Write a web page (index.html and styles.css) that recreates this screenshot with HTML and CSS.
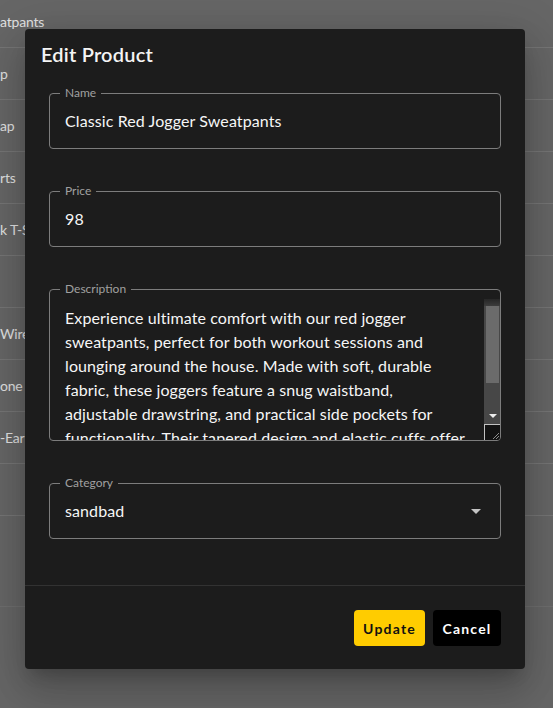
FILE: index.html
```html
<!DOCTYPE html>
<html lang="en">
<head>
<meta charset="utf-8">
<title>Edit Product</title>
<link rel="stylesheet" href="styles.css">
</head>
<body>
<div class="page">
  <div class="table">
    <div class="row">atpants</div>
    <div class="row">p</div>
    <div class="row">ap</div>
    <div class="row">rts</div>
    <div class="row">k T-Shirt</div>
    <div class="row"></div>
    <div class="row">Wireless Earbuds</div>
    <div class="row">one &amp; Charger</div>
    <div class="row">-Ear Headphones</div>
    <div class="row"></div>
    <div class="table-foot"></div>
  </div>
</div>

<div class="dialog" role="dialog" aria-labelledby="dlg-title">
  <h2 class="dialog-title" id="dlg-title">Edit Product</h2>
  <div class="dialog-content">
    <div class="field">
      <span class="field-label">Name</span>
      <div class="field-value">Classic Red Jogger Sweatpants</div>
    </div>
    <div class="field">
      <span class="field-label">Price</span>
      <div class="field-value">98</div>
    </div>
    <div class="field field-multi">
      <span class="field-label">Description</span>
      <textarea class="field-textarea">Experience ultimate comfort with our red jogger
sweatpants, perfect for both workout sessions and
lounging around the house. Made with soft, durable
fabric, these joggers feature a snug waistband,
adjustable drawstring, and practical side pockets for
functionality. Their tapered design and elastic cuffs offer
a modern fit that keeps you looking stylish.</textarea>
      <div class="scrollbar" aria-hidden="true">
        <div class="sb-top"></div>
        <div class="sb-track"><div class="sb-thumb"></div></div>
        <div class="sb-down"><svg viewBox="0 0 8 4" width="8" height="4"><path d="M0 0h8L4 4z" fill="#ececec"/></svg></div>
        <div class="sb-corner"><svg viewBox="0 0 15 15" width="15" height="15"><path d="M14 8L8 14M14 11L11 14" stroke="#8c8c8c" stroke-width="1"/></svg></div>
      </div>
    </div>
    <div class="field field-select">
      <span class="field-label">Category</span>
      <div class="field-value">sandbad</div>
      <svg class="select-arrow" viewBox="0 0 24 24" width="24" height="24" aria-hidden="true"><path d="M7 10l5 5 5-5z" fill="#c4c4c4"/></svg>
    </div>
  </div>
  <div class="dialog-actions">
    <button class="btn btn-update">Update</button>
    <button class="btn btn-cancel">Cancel</button>
  </div>
</div>
</body>
</html>
```

FILE: styles.css
```css
* { box-sizing: border-box; }

html, body {
  margin: 0;
  padding: 0;
  height: 100%;
}

body {
  background: #666666;
  font-family: Lato, "Noto Sans", sans-serif;
  overflow: hidden;
}

.page {
  height: 100%;
}

.table {
  margin-top: -4px;
}

.row {
  height: 52px;
  border-bottom: 1px solid #767676;
  display: flex;
  align-items: center;
  font-size: 14px;
  letter-spacing: -0.2px;
  color: #e2e2e2;
  white-space: nowrap;
  overflow: hidden;
}

.table-foot {
  height: 91px;
  border-bottom: 1px solid #6f6f6f;
}

.dialog {
  position: absolute;
  left: 25px;
  top: 29px;
  width: 500px;
  background: #1c1c1c;
  border-radius: 4px;
  box-shadow: 0 11px 15px -7px rgba(0,0,0,0.2),
              0 24px 38px 3px rgba(0,0,0,0.14),
              0 9px 46px 8px rgba(0,0,0,0.12);
  color: #ffffff;
}

.dialog-title {
  margin: 0;
  height: 64px;
  padding: 9px 16px 0;
  font-size: 20px;
  line-height: 32px;
  font-weight: 600;
  letter-spacing: 0.2px;
  color: #f4f4f4;
}

.dialog-content {
  padding: 0 24px 46px;
  display: flex;
  flex-direction: column;
  gap: 42px;
  border-bottom: 1px solid #323232;
}

.field {
  position: relative;
  border: 1px solid #7c7c7c;
  border-radius: 4px;
}

.field-label {
  position: absolute;
  top: -9px;
  left: 10px;
  padding: 0 5px;
  background: #1c1c1c;
  font-size: 12px;
  line-height: 16px;
  color: #a0a0a0;
}

.field-value {
  padding: 15px 15px;
  font-size: 16px;
  line-height: 24px;
  letter-spacing: 0.1px;
  color: #f6f6f6;
}

.field-multi {
  height: 152px;
  padding-top: 9px;
  display: flex;
}

.field-textarea {
  display: block;
  flex: 1;
  min-width: 0;
  height: 141px;
  margin: 0;
  border: 0;
  outline: none;
  background: transparent;
  color: #f6f6f6;
  font-family: inherit;
  font-size: 16px;
  line-height: 24px;
  letter-spacing: 0.1px;
  padding: 7px 14px 0 15px;
  overflow: hidden;
  resize: none;
}

.scrollbar {
  width: 16px;
  flex: none;
  display: flex;
  flex-direction: column;
  height: 141px;
}

.sb-top {
  height: 7px;
  background: linear-gradient(to bottom, #262626, #3c3c3c);
}

.sb-track {
  flex: 1;
  background: #474747;
  padding: 0 1px 0 2px;
}

.sb-thumb {
  height: 77px;
  background: #6b6b6b;
}

.sb-down {
  height: 16px;
  background: #474747;
  display: flex;
  align-items: center;
  justify-content: center;
  padding-left: 1px;
}

.sb-down svg {
  display: block;
}

.sb-corner {
  height: 16px;
  border-left: 1px solid #c2c2c2;
  border-top: 1px solid #c2c2c2;
  background: #131313;
  border-bottom-right-radius: 3px;
}

.sb-corner svg {
  display: block;
}

.field-select {
  display: flex;
  align-items: center;
}

.field-select .field-value {
  flex: 1;
}

.select-arrow {
  margin-right: 12px;
  flex: none;
}

.dialog-actions {
  display: flex;
  justify-content: flex-end;
  gap: 8px;
  padding: 24px 24px 23px;
}

.btn {
  height: 36px;
  border: 0;
  border-radius: 4px;
  padding: 0 9px;
  font-family: inherit;
  font-size: 14px;
  font-weight: 700;
  letter-spacing: 1.2px;
  cursor: pointer;
}

.btn-update {
  background: #ffcc00;
  color: #111111;
  width: 71px;
}

.btn-cancel {
  background: #000000;
  color: #ffffff;
  width: 68px;
}
```
